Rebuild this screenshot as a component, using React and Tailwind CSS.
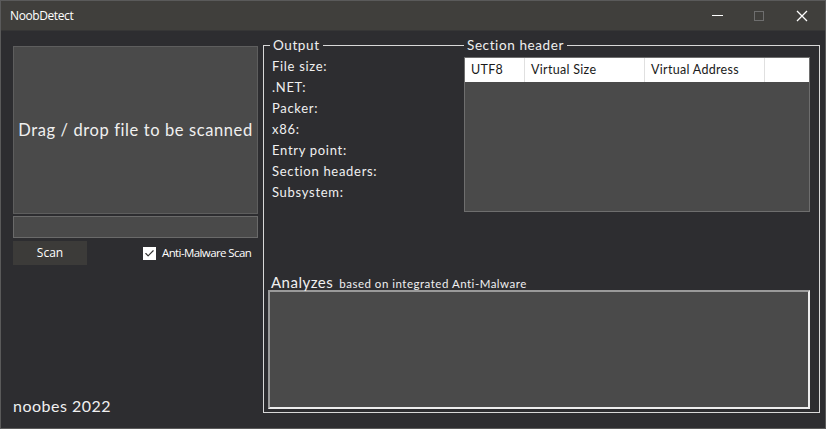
import { Check } from 'lucide-react';

const fields = ['File size:', '.NET:', 'Packer:', 'x86:', 'Entry point:', 'Section headers:', 'Subsystem:'];

const columns = [
    { name: 'UTF8', w: 'w-[60px]' },
    { name: 'Virtual Size', w: 'w-[120px]' },
    { name: 'Virtual Address', w: 'w-[120px]' },
    { name: '', w: 'flex-1' },
];

const App = () => {
    return (
        <div className="w-[826px] h-[429px] flex flex-col bg-[#2d2d30] border border-[#5a5a5a] text-white font-['Lato',sans-serif] overflow-hidden">
            {/* Title bar */}
            <div className="h-[30px] shrink-0 flex items-center bg-[#403f3c] border-b border-[#363636]">
                <span className="pl-[9px] text-[12px] font-['Open_Sans',sans-serif] tracking-[-0.4px]">NoobDetect</span>
                <div className="ml-auto flex items-center h-full">
                    <div className="w-[44px] h-full flex items-center justify-center">
                        <div className="w-[11px] h-[1.5px] bg-white" />
                    </div>
                    <div className="w-[40px] h-full flex items-center justify-center">
                        <div className="w-[10px] h-[10px] border border-[#6e6e6e]" />
                    </div>
                    <div className="w-[46px] h-full flex items-center justify-center">
                        <svg width="12" height="12" viewBox="0 0 12 12" stroke="white" strokeWidth="1.3">
                            <path d="M1 1 L11 11 M11 1 L1 11" />
                        </svg>
                    </div>
                </div>
            </div>

            <div className="flex-1 flex">
                {/* Left column */}
                <div className="w-[262px] shrink-0 flex flex-col pl-[12px] pt-[15px] pb-[10px]">
                    <div className="w-[245px] h-[168px] bg-[#4a4a4a] border border-[#5e5e5e] flex items-center justify-center">
                        <span className="text-[16.5px] tracking-[0.6px] text-[#f0f0f0]">Drag / drop file to be scanned</span>
                    </div>
                    <div className="mt-[2px] w-[245px] h-[22px] bg-[#4a4a4a] border border-[#6a6a6a]" />
                    <div className="mt-[3px] flex items-center">
                        <button className="w-[74px] h-[24px] bg-[#3c3b39] text-[12px] font-['Open_Sans',sans-serif] text-white">Scan</button>
                        <div className="ml-[56px] flex items-center gap-[6px]">
                            <div className="w-[13px] h-[13px] bg-white flex items-center justify-center">
                                <Check className="w-[11px] h-[11px] text-[#333]" strokeWidth={2.5} />
                            </div>
                            <span className="text-[11.5px] font-['Open_Sans',sans-serif] tracking-[-0.6px] text-white">Anti-Malware Scan</span>
                        </div>
                    </div>
                    <div className="mt-auto text-[16px] tracking-[0.5px] text-[#f0f0f0]">noobes 2022</div>
                </div>

                {/* Group box */}
                <div className="pt-[14px] pb-[14px]">
                    <div className="relative w-[557px] h-[368px] border border-[#d8d8d8]">
                        <span className="absolute -top-[9px] left-[6px] px-[3px] bg-[#2d2d30] text-[13.5px] tracking-[0.6px] leading-[16px] text-[#f0f0f0]">Output</span>
                        <span className="absolute -top-[9px] left-[200px] px-[3px] bg-[#2d2d30] text-[13.5px] tracking-[0.6px] leading-[16px] text-[#f0f0f0]">Section header</span>

                        <div className="flex pt-[10px]">
                            <div className="w-[200px] pl-[8px] flex flex-col">
                                {fields.map((f) => (
                                    <div key={f} className="h-[21px] flex items-center text-[13px] tracking-[0.7px] text-[#f0f0f0]">{f}</div>
                                ))}
                            </div>
                            <div className="mt-[1px] w-[346px] h-[155px] bg-[#4a4a4a] border border-[#6e6e6e] flex flex-col">
                                <div className="h-[24px] bg-white flex text-[12.5px] tracking-[0.3px] text-[#1a1a1a]">
                                    {columns.map((c, i) => (
                                        <div key={i} className={`${c.w} h-full flex items-center pl-[6px] border-r border-[#e0e0e0] last:border-r-0`}>{c.name}</div>
                                    ))}
                                </div>
                            </div>
                        </div>

                        <div className="mt-[62px] pl-[7px] flex items-end gap-[6px] h-[16px]">
                            <span className="text-[15px] leading-[16px] tracking-[0.5px] text-[#f0f0f0]">Analyzes</span>
                            <span className="text-[11.5px] leading-[13px] tracking-[0.5px] text-[#f0f0f0]">based on integrated Anti-Malware</span>
                        </div>
                        <div className="ml-[4px] w-[542px] h-[119px] bg-[#4a4a4a] border-2 border-t-[#9a9a9a] border-l-[#9a9a9a] border-b-[#ededed] border-r-[#ededed]" />
                    </div>
                </div>
            </div>
        </div>
    );
};

export default App;
